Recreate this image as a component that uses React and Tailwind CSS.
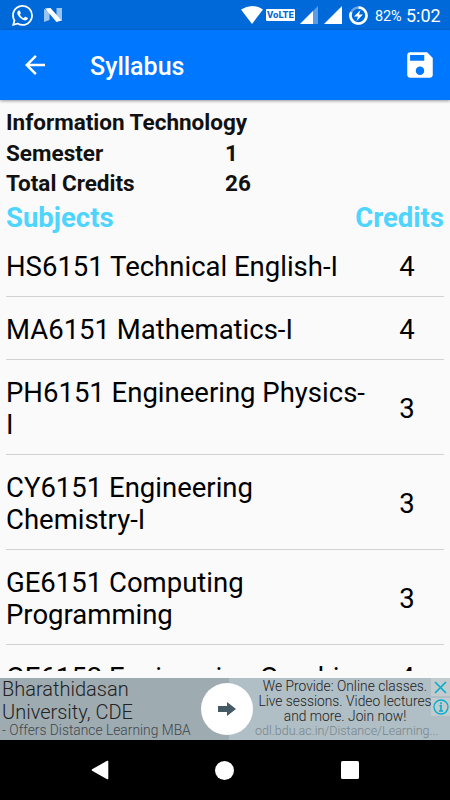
import React from "react";

const subjects = [
  { lines: ["HS6151 Technical English-I"], credits: 4 },
  { lines: ["MA6151 Mathematics-I"], credits: 4 },
  { lines: ["PH6151 Engineering Physics-", "I"], credits: 3 },
  { lines: ["CY6151 Engineering", "Chemistry-I"], credits: 3 },
  { lines: ["GE6151 Computing", "Programming"], credits: 3 },
  { lines: ["GE6152 Engineering Graphics"], credits: 4 },
];

function StatusBar() {
  return (
    <div className="flex h-[30px] items-center bg-[#0069d9] text-white">
      {/* WhatsApp */}
      <svg className="ml-3 shrink-0" width="21" height="21" viewBox="0 0 24 24" fill="currentColor">
        <path d="M17.472 14.382c-.297-.149-1.758-.867-2.03-.967-.273-.099-.471-.148-.67.15-.197.297-.767.966-.94 1.164-.173.199-.347.223-.644.075-.297-.15-1.255-.463-2.39-1.475-.883-.788-1.48-1.761-1.653-2.059-.173-.297-.018-.458.13-.606.134-.133.298-.347.446-.52.149-.174.198-.298.298-.497.099-.198.05-.371-.025-.52-.075-.149-.669-1.612-.916-2.207-.242-.579-.487-.5-.669-.51-.173-.008-.371-.01-.57-.01-.198 0-.52.074-.792.372-.272.297-1.04 1.016-1.04 2.479 0 1.462 1.065 2.875 1.213 3.074.149.198 2.096 3.2 5.077 4.487.709.306 1.262.489 1.694.625.712.227 1.36.195 1.871.118.571-.085 1.758-.719 2.006-1.413.248-.694.248-1.289.173-1.413-.074-.124-.272-.198-.57-.347m-5.421 7.403h-.004a9.87 9.87 0 01-5.031-1.378l-.361-.214-3.741.982.998-3.648-.235-.374a9.86 9.86 0 01-1.51-5.26c.001-5.45 4.436-9.884 9.888-9.884 2.64 0 5.122 1.03 6.988 2.898a9.825 9.825 0 012.893 6.994c-.003 5.45-4.437 9.884-9.885 9.884m8.413-18.297A11.815 11.815 0 0012.05 0C5.495 0 .16 5.335.157 11.892c0 2.096.547 4.142 1.588 5.945L.057 24l6.305-1.654a11.882 11.882 0 005.683 1.448h.005c6.554 0 11.89-5.335 11.893-11.893a11.821 11.821 0 00-3.480-8.413z" />
      </svg>
      {/* Nougat */}
      <svg className="ml-[11px] shrink-0" width="18" height="14" viewBox="0 0 18 14">
        <path d="M0 1L5.500 4V12L0 14Z" fill="#fff" opacity="0.6" />
        <path d="M18 0L12.500 0V10L18 13Z" fill="#fff" opacity="0.6" />
        <path d="M1 .5L6.500 0L17.500 12.500L12.500 14Z" fill="#fff" />
      </svg>

      <svg className="ml-auto shrink-0" width="22" height="18" viewBox="0 0 22 18">
        <path d="M0 3.500Q11-3.500 22 3.500L11 18Z" fill="#fff" />
      </svg>
      <span className="ml-[3px] flex h-[12px] w-[29px] items-center justify-center rounded-[1px] bg-white text-[9.5px] leading-none font-extrabold text-[#0069d9]">
        VoLTE
      </span>
      <svg className="ml-[5px] shrink-0" width="18" height="18" viewBox="0 0 18 18">
        <path d="M0 18L18 0V18Z" fill="#fff" opacity="0.35" />
        <path d="M0 18L13 5V18Z" fill="#fff" />
      </svg>
      <svg className="ml-1.5 shrink-0" width="18" height="18" viewBox="0 0 18 18">
        <path d="M0 18L18 0V18Z" fill="#fff" />
      </svg>
      <svg className="ml-[7px] shrink-0" width="19" height="19" viewBox="0 0 19 19" fill="none">
        <circle cx="9.500" cy="9.500" r="8" stroke="#fff" strokeWidth="2.600" opacity="0.4" />
        <path d="M9.500 1.500A8 8 0 1 1 2.200 6.200" stroke="#fff" strokeWidth="2.600" />
        <path d="M11.500 4L5 10.500H9L7.500 15L14 8.500H10Z" fill="#fff" />
      </svg>
      <span className="mt-[4px] ml-[7px] w-[29px] text-[14.5px] leading-none tracking-[-0.2px]">82%</span>
      <span className="mt-[2px] mr-[9px] ml-[2px] w-[35px] text-[18px] leading-none">5:02</span>
    </div>
  );
}

function AppBar() {
  return (
    <div className="relative z-10 flex h-[70px] items-center bg-[#0077ff] text-white shadow-[0_1px_3px_rgba(0,0,0,0.4)]">
      <svg className="ml-5" width="30" height="30" viewBox="0 0 24 24" fill="currentColor">
        <path d="M20 11H7.830l5.590-5.590L12 4l-8 8 8 8 1.410-1.410L7.830 13H20v-2z" />
      </svg>
      <h1 className="ml-10 pt-[3px] text-[25px] font-medium">Syllabus</h1>
      <svg className="mr-[13px] ml-auto" width="34" height="34" viewBox="0 0 24 24" fill="currentColor">
        <path
          fillRule="evenodd"
          d="M17 3H5c-1.110 0-2 .9-2 2v14c0 1.100.89 2 2 2h14c1.100 0 2-.9 2-2V7l-4-4zM12 13a3 3 0 1 1 0 6a3 3 0 0 1 0-6zM5 5H15V9H5z"
        />
      </svg>
    </div>
  );
}

function SubjectRow({ lines, credits }) {
  return (
    <div className="flex items-center border-b border-[#d2d2d2] pt-[17px] pb-[13px] text-[27.5px] leading-8 text-black">
      <div className="flex-1 whitespace-nowrap">
        {lines.map((line) => (
          <div key={line}>{line}</div>
        ))}
      </div>
      <div className="w-[74px] text-center">{credits}</div>
    </div>
  );
}

function AdBanner() {
  return (
    <div className="relative flex h-[62px] shrink-0 bg-[#b0bec5] font-light text-[#222]">
      <div className="w-[229px] bg-[#9eabb1] pl-0.5 whitespace-nowrap">
        <div className="text-[20px] leading-[23px]">Bharathidasan</div>
        <div className="text-[20px] leading-[22px]">University, CDE</div>
        <div className="text-[13.8px] leading-[15px] text-[#3f484c]">- Offers Distance Learning MBA</div>
      </div>
      <div className="flex-1 pt-px pl-[26px] text-[13.8px] leading-[15px] whitespace-nowrap">
        <div className="w-[180px] text-center">
          <div>We Provide: Online classes.</div>
          <div>Live sessions. Video lectures</div>
          <div>and more. Join now!</div>
        </div>
        <div className="text-[12.5px] leading-[14px] text-[#77858c]">odl.bdu.ac.in/Distance/Learning...</div>
      </div>
      <div className="absolute top-[5px] left-[201px] flex size-[52px] items-center justify-center rounded-full bg-white">
        <svg width="18" height="14" viewBox="0 0 18 14">
          <path d="M0 4H9V0L18 7L9 14V10H0Z" fill="#455a64" />
        </svg>
      </div>
      <div className="absolute top-0 right-0 flex flex-col gap-0.5">
        <div className="flex h-[18px] w-[19px] items-center justify-center bg-[#c3cbcf]">
          <svg width="13" height="13" viewBox="0 0 13 13">
            <path d="M1 1L12 12M12 1L1 12" stroke="#00aecd" strokeWidth="1.600" />
          </svg>
        </div>
        <div className="flex h-[18px] w-[19px] items-center justify-center bg-[#c3cbcf]">
          <svg width="16" height="16" viewBox="0 0 16 16" fill="none" stroke="#00aecd">
            <circle cx="8" cy="8" r="7" strokeWidth="1.300" />
            <path d="M8 3.200V5.200M6.500 6.800H8V12M6 12H10" strokeWidth="1.600" />
          </svg>
        </div>
      </div>
    </div>
  );
}

function NavBar() {
  return (
    <div className="flex h-[60px] shrink-0 items-center bg-black">
      <svg className="ml-[91px]" width="18" height="20" viewBox="0 0 18 20">
        <path d="M1.500 10L16.500 1.500V18.500Z" fill="#fff" stroke="#fff" strokeWidth="1.600" strokeLinejoin="round" />
      </svg>
      <div className="ml-[106px] size-[19px] rounded-full bg-white" />
      <div className="ml-[107px] size-[18px] rounded-[1.5px] bg-white" />
    </div>
  );
}

export default function App() {
  return (
    <div className="flex h-[800px] w-[450px] flex-col overflow-hidden bg-[#fafafa] font-[Roboto,sans-serif]">
      <StatusBar />
      <AppBar />
      <div className="h-[571px] shrink-0 overflow-hidden px-1.5 pt-[7px]">
        <div className="text-[22.5px] font-bold text-[#111]">
          <div className="leading-[31px]">Information Technology</div>
          <div className="flex leading-[30px]">
            <span className="w-[219px]">Semester</span>
            <span>1</span>
          </div>
          <div className="flex leading-[30px]">
            <span className="w-[219px]">Total Credits</span>
            <span>26</span>
          </div>
        </div>
        <div className="flex h-9 items-center justify-between pt-[3px] text-[27.5px] leading-8 font-bold text-[#4dd5ff]">
          <span>Subjects</span>
          <span>Credits</span>
        </div>
        {subjects.map((subject) => (
          <SubjectRow key={subject.lines[0]} {...subject} />
        ))}
      </div>
      <div className="h-[7px] shrink-0" />
      <AdBanner />
      <NavBar />
    </div>
  );
}
